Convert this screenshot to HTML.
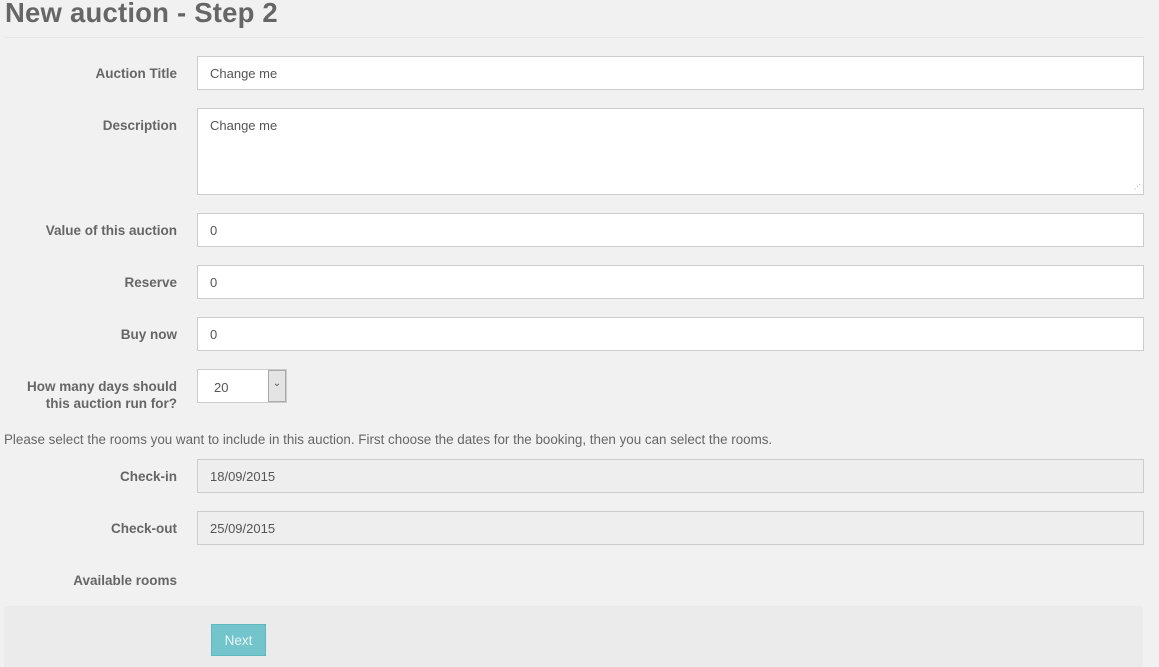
<!DOCTYPE html>
<html><head><style>
body{margin:0;width:1159px;height:667px;background:#f1f1f1;font-family:"Liberation Sans",sans-serif;color:#666;position:relative;overflow:hidden}
.a{position:absolute}
h1{position:absolute;left:5px;top:-3px;margin:0;font-size:27.5px;font-weight:bold;color:#666;letter-spacing:0.2px}
.hr{left:4px;top:37px;width:1140px;height:1px;background:#e6e6e6}
.l{position:absolute;right:982px;font-size:13.5px;font-weight:bold;text-align:right;line-height:17px;color:#666;white-space:nowrap}
.i{position:absolute;left:197px;width:945px;height:32px;background:#fff;border:1px solid #ccc;font-size:13px;color:#555;box-sizing:content-box}
.i span{position:absolute;left:12px;top:9px}
.g{background:#eee}
</style></head><body>
<h1>New auction - Step 2</h1>
<div class="a hr"></div>
<div class="l" style="top:65px">Auction Title</div>
<div class="i" style="top:56px"><span>Change me</span></div>
<div class="l" style="top:117px">Description</div>
<div class="i" style="top:108px;height:85px"><span>Change me</span><span style="left:auto;right:2px;top:74px;font-size:7px;color:#999">⋰</span></div>
<div class="l" style="top:222px">Value of this auction</div>
<div class="i" style="top:213px"><span>0</span></div>
<div class="l" style="top:274px">Reserve</div>
<div class="i" style="top:265px"><span>0</span></div>
<div class="l" style="top:326px">Buy now</div>
<div class="i" style="top:317px"><span>0</span></div>
<div class="l" style="top:378px">How many days should<br>this auction run for?</div>
<div class="i" style="top:369px;width:88px"><span style="left:16px;top:10px">20</span><div class="a" style="right:0;top:0;width:16px;height:30px;background:#e4e4e4;border:1px solid #aaa;font-size:10px;text-align:center;line-height:26px;color:#555">&#8964;</div></div>
<div class="a" style="left:4px;top:432px;font-size:13.4px;color:#666;white-space:nowrap">Please select the rooms you want to include in this auction. First choose the dates for the booking, then you can select the rooms.</div>
<div class="l" style="top:468px">Check-in</div>
<div class="i g" style="top:459px"><span>18/09/2015</span></div>
<div class="l" style="top:520px">Check-out</div>
<div class="i g" style="top:511px"><span>25/09/2015</span></div>
<div class="l" style="top:572px">Available rooms</div>
<div class="a" style="left:4px;top:606px;width:1139px;height:61px;background:#ebebeb"></div>
<div class="a" style="left:211px;top:624px;width:53px;height:30px;background:#74c4cc;border:1px solid #5fb8c0;color:#e8f7f8;font-size:13.5px;text-align:center;line-height:31px">Next</div>
</body></html>
